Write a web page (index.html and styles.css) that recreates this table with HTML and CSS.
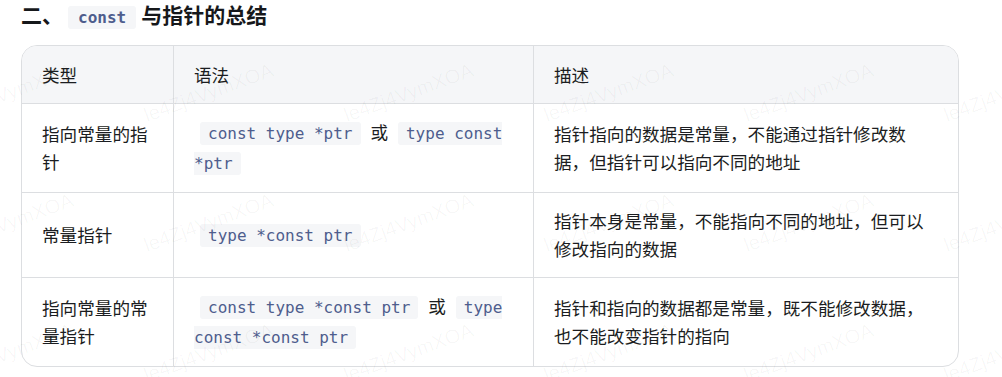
FILE: index.html
```html
<!DOCTYPE html>
<html lang="zh-CN">
<head>
<meta charset="utf-8">
<title>const 与指针的总结</title>
<link rel="stylesheet" href="styles.css">
</head>
<body>
<main class="page">
  <h2 class="title">二、<code class="code code-title">const</code>与指针的总结</h2>
  <div class="table-wrap">
    <table class="summary">
      <colgroup>
        <col class="col-type">
        <col class="col-syntax">
        <col class="col-desc">
      </colgroup>
      <thead>
        <tr><th>类型</th><th>语法</th><th>描述</th></tr>
      </thead>
      <tbody>
        <tr>
          <td>指向常量的指针</td>
          <td><code class="code">const type *ptr</code> 或 <code class="code">type const *ptr</code></td>
          <td>指针指向的数据是常量，不能通过指针修改数据，但指针可以指向不同的地址</td>
        </tr>
        <tr>
          <td>常量指针</td>
          <td><code class="code">type *const ptr</code></td>
          <td>指针本身是常量，不能指向不同的地址，但可以修改指向的数据</td>
        </tr>
        <tr>
          <td>指向常量的常量指针</td>
          <td><code class="code">const type *const ptr</code> 或 <code class="code">type const *const ptr</code></td>
          <td>指针和指向的数据都是常量，既不能修改数据，也不能改变指针的指向</td>
        </tr>
      </tbody>
    </table>
  </div>
</main>
<div class="watermark" aria-hidden="true">
  <span>le4Zj4VymXOA</span><span>le4Zj4VymXOA</span><span>le4Zj4VymXOA</span><span>le4Zj4VymXOA</span><span>le4Zj4VymXOA</span><span>le4Zj4VymXOA</span>
  <span>le4Zj4VymXOA</span><span>le4Zj4VymXOA</span><span>le4Zj4VymXOA</span><span>le4Zj4VymXOA</span><span>le4Zj4VymXOA</span><span>le4Zj4VymXOA</span>
  <span>le4Zj4VymXOA</span><span>le4Zj4VymXOA</span><span>le4Zj4VymXOA</span><span>le4Zj4VymXOA</span><span>le4Zj4VymXOA</span><span>le4Zj4VymXOA</span>
  <span>le4Zj4VymXOA</span><span>le4Zj4VymXOA</span><span>le4Zj4VymXOA</span><span>le4Zj4VymXOA</span><span>le4Zj4VymXOA</span><span>le4Zj4VymXOA</span>
</div>
</body>
</html>
```

FILE: styles.css
```css
html, body {
  margin: 0;
  padding: 0;
  background: #ffffff;
}

body {
  position: relative;
  overflow: hidden;
  height: 377px;
  font-family: "Noto Sans CJK SC", "Noto Sans", sans-serif;
  color: #1b1d21;
}

.page {
  padding: 0 0 0 21px;
}

.title {
  margin: 0;
  font-size: 21px;
  line-height: 28px;
  font-weight: 700;
  color: #16181b;
}

.code {
  font-family: "DejaVu Sans Mono", "Liberation Mono", monospace;
  font-size: 16px;
  font-weight: 400;
  color: #4e5d8d;
  background: #f5f6f8;
  padding: 2px 8px;
  margin: 0 6px;
  border-radius: 3px;
}

.code-title {
  font-weight: 700;
  padding: 2px 10px;
  margin: 0 5px;
}

.table-wrap {
  margin-top: 13px;
  width: 938px;
  box-sizing: border-box;
  border: 1px solid #dcdee1;
  border-radius: 16px;
  overflow: hidden;
}

.summary {
  width: 100%;
  table-layout: fixed;
  border-collapse: separate;
  border-spacing: 0;
  font-size: 17.6px;
  line-height: 28px;
}

.col-type { width: 152px; }
.col-syntax { width: 360px; }

.summary th,
.summary td {
  padding: 14px 20px;
  text-align: left;
  vertical-align: middle;
  font-weight: 400;
  border-right: 1px solid #dcdee1;
  border-bottom: 1px solid #dcdee1;
}

.summary th {
  padding-top: 15px;
}

.summary th:last-child,
.summary td:last-child {
  border-right: none;
}

.summary tbody tr:last-child td {
  border-bottom: none;
}

.summary thead th {
  background: #f5f6f8;
}

.watermark {
  position: absolute;
  left: -52px;
  top: -5px;
  display: grid;
  grid-template-columns: repeat(6, 200px);
  grid-auto-rows: 130px;
  align-items: end;
  pointer-events: none;
  font-family: "Liberation Sans", Arial, sans-serif;
  font-size: 20px;
  line-height: 20px;
  color: rgba(0, 0, 0, 0.035);
}

.watermark span {
  display: block;
  white-space: nowrap;
  transform-origin: 0 100%;
  transform: rotate(-20deg);
}
```
